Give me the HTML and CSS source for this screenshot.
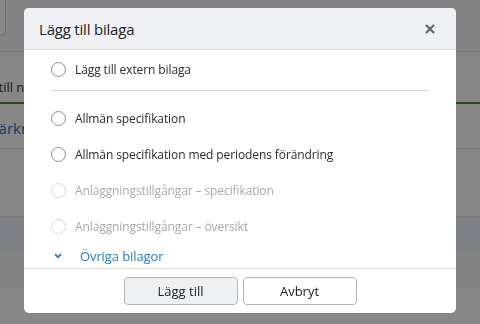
FILE: index.html
```
<!DOCTYPE html>
<html lang="sv">
<head>
    <meta charset="UTF-8">
    <meta name="viewport" content="width=device-width, initial-scale=1.0">
    <title>Lägg till bilaga</title>
    <link rel="stylesheet" href="styles.css">
</head>
<body>
    <div class="page">
        <div class="topbar">
            <div class="search-box"></div>
        </div>
        <div class="tabs">
            <div class="tab-text">Lägg till namn</div>
        </div>
        <div class="list-row">
            <div class="link-text">Anmärkning</div>
        </div>
        <div class="list-space"></div>
        <div class="list-selected"></div>
        <div class="list-rest"></div>
        <div class="page-bottom"></div>
    </div>

    <div class="overlay"></div>

    <div class="modal">
        <div class="modal-header">
            <h1>Lägg till bilaga</h1>
            <span class="close">
                <svg width="10" height="10" viewBox="0 0 10 10"><path d="M1 1L9 9M9 1L1 9" stroke="#666" stroke-width="2.2"/></svg>
            </span>
        </div>

        <div class="modal-body">
            <label class="option">
                <span class="radio"></span>
                <span>Lägg till extern bilaga</span>
            </label>
            <div class="divider"></div>
            <label class="option">
                <span class="radio"></span>
                <span>Allmän specifikation</span>
            </label>
            <label class="option">
                <span class="radio"></span>
                <span>Allmän specifikation med periodens förändring</span>
            </label>
            <label class="option disabled">
                <span class="radio"></span>
                <span>Anläggningstillgångar – specifikation</span>
            </label>
            <label class="option disabled">
                <span class="radio"></span>
                <span>Anläggningstillgångar – översikt</span>
            </label>
            <div class="more">
                <svg width="8" height="6" viewBox="0 0 8 6"><path d="M1 1.2L4 4.2L7 1.2" fill="none" stroke="#2a79cc" stroke-width="1.8"/></svg>
                <span>Övriga bilagor</span>
            </div>
        </div>

        <div class="modal-footer">
            <button class="btn btn-primary">Lägg till</button>
            <button class="btn">Avbryt</button>
        </div>
    </div>
</body>
</html>
```
FILE: styles.css
```
* {
    margin: 0;
    padding: 0;
    box-sizing: border-box;
}

body {
    font-family: 'Open Sans', 'Liberation Sans', sans-serif;
    background: #ffffff;
    width: 480px;
    height: 324px;
    overflow: hidden;
}

/* page behind the dialog */
.page {
    height: 324px;
    display: flex;
    flex-direction: column;
}

.topbar {
    height: 52px;
    background: #fafafa;
    border-bottom: 1px solid #e2e2e2;
}

.search-box {
    width: 20px;
    height: 36px;
    margin-left: -14px;
    border: 1px solid #cfcfcf;
    border-top: none;
    border-radius: 0 0 5px 5px;
    background: #ffffff;
}

.tabs {
    height: 52px;
    border-bottom: 2px solid #3f8f1f;
    display: flex;
    align-items: flex-end;
    padding-bottom: 6px;
    overflow: hidden;
}

.tab-text {
    margin-left: -33px;
    font-size: 13px;
    color: #333;
    white-space: nowrap;
}

.list-row {
    height: 45px;
    border-bottom: 1px solid #dddddd;
    display: flex;
    align-items: center;
    padding-top: 3px;
    overflow: hidden;
}

.link-text {
    margin-left: -34px;
    font-size: 15px;
    color: #1c70c4;
    white-space: nowrap;
}

.list-space {
    height: 68px;
    border-bottom: 1px solid #e6e6e6;
}

.list-selected {
    height: 32px;
    background: #edf3fb;
}

.list-rest {
    height: 42px;
    background: #f9f9f9;
}

.page-bottom {
    flex: 1;
    background: #ffffff;
}

.overlay {
    position: fixed;
    inset: 0;
    background: rgba(0, 0, 0, 0.47);
}

/* dialog */
.modal {
    position: fixed;
    left: 24px;
    top: 8px;
    width: 432px;
    height: 305px;
    background: #ffffff;
    border-radius: 5px;
    overflow: hidden;
    display: flex;
    flex-direction: column;
}

.modal-header {
    height: 42px;
    background: #eff0f4;
    border-bottom: 1px solid #dcdde1;
    display: flex;
    align-items: center;
    justify-content: space-between;
    padding: 0 21px 0 15px;
}

.modal-header h1 {
    font-size: 15px;
    font-weight: 400;
    letter-spacing: -0.2px;
    color: #222;
}

.close {
    display: flex;
}

.modal-body {
    flex: 1;
    padding: 1px 27px 0;
}

.option {
    height: 36px;
    display: flex;
    align-items: center;
    gap: 9px;
    font-size: 12px;
    letter-spacing: -0.1px;
    color: #2b2b2b;
}

.radio {
    width: 15px;
    height: 15px;
    border: 1px solid #8c8c8c;
    border-radius: 50%;
    background: #fff;
}

.option.disabled {
    color: #a9a9a9;
}

.option.disabled .radio {
    border-color: #d6d6d6;
}

.divider {
    height: 1px;
    background: #d9d9d9;
    margin: 3px 0 9px;
}

.more {
    height: 24px;
    display: flex;
    align-items: center;
    gap: 18px;
    padding-left: 3px;
    font-size: 13px;
    letter-spacing: -0.1px;
    color: #2a79cc;
}

.modal-footer {
    height: 45px;
    border-top: 1px solid #dedede;
    display: flex;
    justify-content: center;
    gap: 5px;
    padding-top: 8px;
}

.btn {
    width: 114px;
    height: 28px;
    border: 1px solid #b3b5b9;
    border-radius: 4px;
    background: #ffffff;
    font-family: 'Open Sans', 'Liberation Sans', sans-serif;
    font-size: 13px;
    color: #222;
}

.btn-primary {
    background: #eef0f4;
}
```
